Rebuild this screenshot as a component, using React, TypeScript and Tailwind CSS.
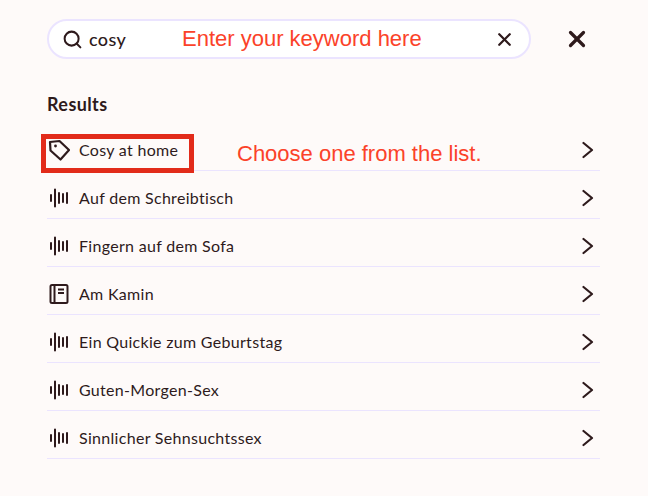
import { Search, X } from "lucide-react";

const results = [
  { name: "Cosy at home", icon: "tag" },
  { name: "Auf dem Schreibtisch", icon: "audio" },
  { name: "Fingern auf dem Sofa", icon: "audio" },
  { name: "Am Kamin", icon: "book" },
  { name: "Ein Quickie zum Geburtstag", icon: "audio" },
  { name: "Guten-Morgen-Sex", icon: "audio" },
  { name: "Sinnlicher Sehnsuchtssex", icon: "audio" },
];

function AudioIcon() {
  return (
    <svg width="22" height="22" viewBox="0 0 22 22" fill="none" stroke="#2e1a1c" strokeWidth="2" strokeLinecap="round">
      <path d="M3 8v6M7 2.500v17M11 6v10M15 7v8M19 6v10" />
    </svg>
  );
}

function TagIcon() {
  return (
    <svg width="22" height="22" viewBox="0 0 22 22" fill="none" stroke="#2e1a1c" strokeWidth="2.200" strokeLinejoin="round">
      <path d="M2 3 11.500 2 21 11 12.500 20.500 2.500 11.500Z" />
      <circle cx="7.500" cy="7" r="1.400" fill="#2e1a1c" stroke="none" />
    </svg>
  );
}

function BookIcon() {
  return (
    <svg width="22" height="22" viewBox="0 0 22 22" fill="none" stroke="#2e1a1c" strokeWidth="2" strokeLinejoin="round">
      <rect x="2.500" y="2" width="17" height="18" rx="1.500" />
      <path d="M6.500 2v18M10 6.500h6M10 10h6" />
    </svg>
  );
}

function RowChevron() {
  return (
    <svg width="12" height="18" viewBox="0 0 12 18" fill="none" stroke="#2e1a1c" strokeWidth="2.200" strokeLinecap="round" strokeLinejoin="round" className="mr-[6px]">
      <path d="M1.500 2 10 9 1.500 16" />
    </svg>
  );
}

function RowIcon({ icon }: { icon: string }) {
  if (icon === "tag") return <TagIcon />;
  if (icon === "book") return <BookIcon />;
  return <AudioIcon />;
}

export default function App() {
  return (
    <div className="relative h-[496px] w-[648px] overflow-hidden bg-[#fefaf9] pl-[47px] pr-[48px] pt-[19px] font-['Lato',sans-serif] text-[#2e1a1c]">
      {/* Search bar */}
      <div className="flex items-center">
        <div className="flex h-10 w-[484px] items-center rounded-[20px] border-2 border-[#ebe4ff] bg-white pl-[13px] pr-[14px]">
          <Search size={21} strokeWidth={2.3} />
          <span className="ml-[6px] flex-1 text-[18px] font-medium tracking-[0.4px]">cosy</span>
          <X size={21} strokeWidth={2.6} />
        </div>
        <X size={26} strokeWidth={3} className="ml-[33px]" />
      </div>

      <h2 className="mt-[34px] text-[18px] leading-[22px] font-bold tracking-[0.4px]">Results</h2>

      {/* List */}
      <ul className="mt-[8px]">
        {results.map((item) => (
          <li key={item.name} className="flex h-12 items-center border-b border-[#ebe4ff] pt-[6px]">
            <div className="ml-[1px] flex w-[31px] shrink-0 items-center">
              <RowIcon icon={item.icon} />
            </div>
            <span className="flex-1 text-[16px] tracking-[0.3px]">{item.name}</span>
            <RowChevron />
          </li>
        ))}
      </ul>

      {/* Annotations */}
      <div className="absolute left-[41px] top-[134px] h-[39px] w-[153px] border-[5px] border-[#e22b1a]" />
      <span className="absolute left-[182px] top-[27px] font-['Liberation_Sans',sans-serif] text-[22px] leading-[24px] text-[#fb4229]">
        Enter your keyword here
      </span>
      <span className="absolute left-[237px] top-[142px] font-['Liberation_Sans',sans-serif] text-[22px] leading-[24px] text-[#fb4229]">
        Choose one from the list.
      </span>
    </div>
  );
}
